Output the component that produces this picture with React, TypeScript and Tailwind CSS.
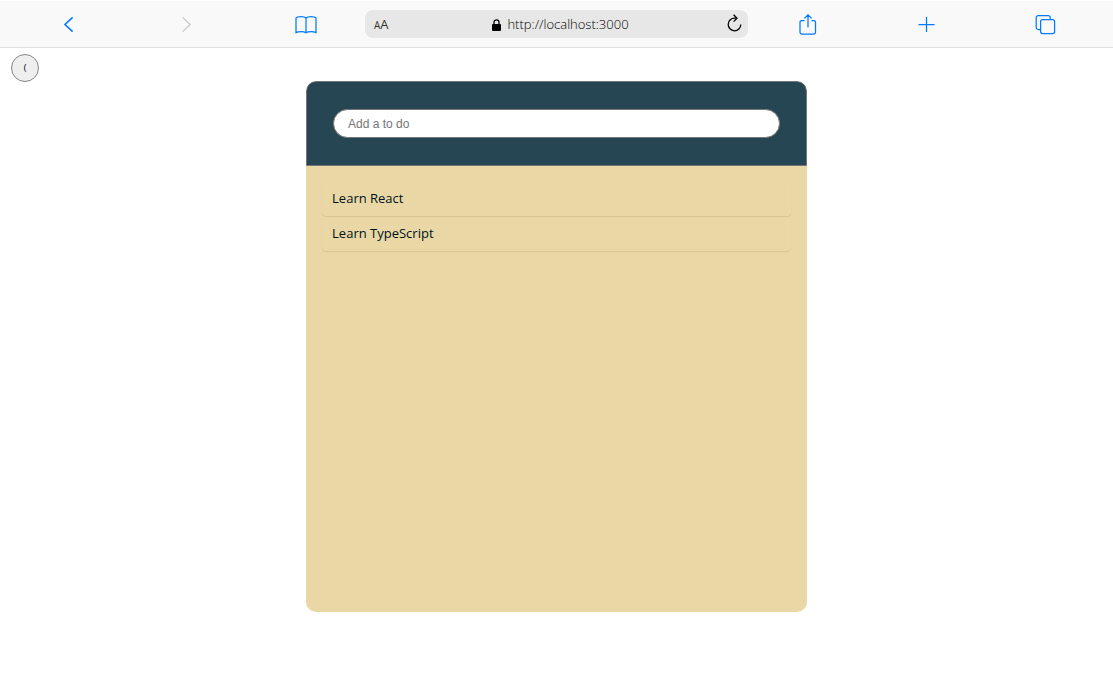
import { useState } from "react";
import type { FormEvent, ReactNode } from "react";

function ToolButton({ label, disabled, children }: { label: string; disabled?: boolean; children: ReactNode }) {
  return (
    <button
      type="button"
      aria-label={label}
      disabled={disabled}
      className="flex h-8 w-8 items-center justify-center justify-self-center text-[#007aff] disabled:text-[#c7c7c7]"
    >
      <svg width="24" height="24" viewBox="0 0 24 24" fill="none" stroke="currentColor" strokeWidth="1.25" aria-hidden="true">
        {children}
      </svg>
    </button>
  );
}

function BrowserBar() {
  return (
    <header className="grid h-12 grid-cols-[1fr_1fr_1fr_383px_1fr_1fr_1fr] items-center border-t border-b border-t-white border-b-[#e0e0e0] bg-[#f9f9f9] px-2">
      <ToolButton label="Back">
        <path d="M16.6 5.4 L9 12.5 L16.6 19.6" strokeWidth="1.6" />
      </ToolButton>
      <ToolButton label="Forward" disabled>
        <path d="M7.6 5.4 L15.2 12.5 L7.6 19.6" />
      </ToolButton>
      <ToolButton label="Bookmarks">
        <path d="M12 6 C10.8 4.8 8.9 4.5 7 4.5 C5 4.5 2.8 4.8 2 6 V20.6 C3.2 20 5 19.6 7 19.6 C9 19.6 10.8 20 12 20.8 C13.2 20 15 19.6 17 19.6 C19 19.6 20.8 20 22 20.6 V6 C21.2 4.8 19 4.5 17 4.5 C15.1 4.5 13.2 4.8 12 6 Z M12 6 V20.8" />
      </ToolButton>
      <div className="flex h-7 items-center rounded-lg bg-[#e7e7e7] px-2 text-black">
        <button type="button" aria-label="Text size" className="flex w-12 items-baseline pt-0.5 pl-px text-[#333]">
          <span className="text-[10px]">A</span>
          <span className="text-[13px]">A</span>
        </button>
        <div className="flex flex-1 items-center justify-center gap-1.5 pt-0.5 pl-1">
          <svg width="9" height="12" viewBox="0 0 9 12" aria-hidden="true">
            <rect x="0" y="5" width="9" height="7" rx="1" />
            <path d="M2 5.5 V3.2 C2 0 7 0 7 3.2 V5.5" fill="none" stroke="currentColor" strokeWidth="1.3" />
          </svg>
          <span className="text-[13px] font-light text-black">http://localhost:3000</span>
        </div>
        <button type="button" aria-label="Reload" className="-mr-1 flex w-12 justify-end">
          <svg width="18" height="20" viewBox="0 0 18 20" fill="none" stroke="currentColor" strokeWidth="1.3" aria-hidden="true">
            <path d="M10.8 4.2 H8.8 A6.3 6.3 0 1 0 14.8 10.6" />
            <path d="M7.6 0.8 L11 4.2 L7.6 7.6" />
          </svg>
        </button>
      </div>
      <ToolButton label="Share">
        <path d="M8.5 8.5 H5.8 A1.8 1.8 0 0 0 4 10.3 V20.2 A1.8 1.8 0 0 0 5.8 22 H17.7 A1.8 1.8 0 0 0 19.5 20.2 V10.3 A1.8 1.8 0 0 0 17.7 8.5 H15.5 M12 15.5 V3 M8.4 6.4 L12 2.8 L15.6 6.4" />
      </ToolButton>
      <ToolButton label="New tab">
        <path d="M11.5 5 V20 M3.5 12.5 H19.5" />
      </ToolButton>
      <ToolButton label="Tabs">
        <path d="M6.5 17.5 H4.2 A2 2 0 0 1 2.2 15.5 V5.5 A2 2 0 0 1 4.2 3.5 H14.2 A2 2 0 0 1 16.2 5.5 V7.5" />
        <rect x="6.6" y="7.6" width="14" height="14" rx="2" />
      </ToolButton>
    </header>
  );
}

export default function App() {
  const [todos, setTodos] = useState(["Learn React", "Learn TypeScript"]);
  const [draft, setDraft] = useState("");

  function addTodo(event: FormEvent) {
    event.preventDefault();
    if (draft.trim()) {
      setTodos([...todos, draft.trim()]);
      setDraft("");
    }
  }

  return (
    <div className="min-h-screen bg-white font-['Open_Sans','Noto_Sans',sans-serif]">
      <BrowserBar />
      <div className="h-[33px] px-[11px] pt-1.5">
        <button
          type="button"
          aria-label="Go back"
          className="flex h-7 w-7 items-center justify-center rounded-full border border-[#858585] bg-[#efefef] text-[9px] text-black"
        >
          (
        </button>
      </div>
      <main className="mx-auto flex min-h-[531px] w-[45%] flex-col overflow-hidden rounded-[10px] bg-[#e9d8a6]">
        <form onSubmit={addTodo} className="rounded-t-[10px] border border-[#767676] bg-[#264653] px-[26px] py-[27px]">
          <input
            aria-label="Add a to do"
            placeholder="Add a to do"
            value={draft}
            onChange={(event) => setDraft(event.target.value)}
            className="block h-[29px] w-full rounded-full border border-[#767676] bg-white px-3.5 font-['Liberation_Sans',sans-serif] text-[12px] outline-none placeholder:text-[#757575]"
          />
        </form>
        <ul className="flex flex-col px-4 pt-[15px]">
          {todos.map((todo, index) => (
            <li key={index} className="flex h-[35px] items-center rounded-[4px] px-2.5 text-[13px] text-[#001219] shadow-[0_1px_1px_rgba(0,0,0,0.09)]">
              {todo}
            </li>
          ))}
        </ul>
      </main>
    </div>
  );
}
